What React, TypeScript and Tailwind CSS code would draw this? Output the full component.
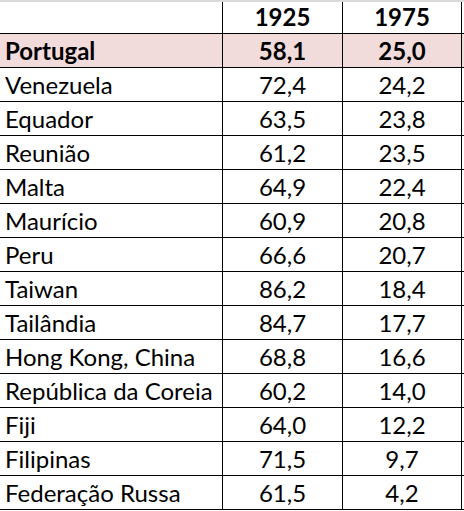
const rows: [string, string, string][] = [
  ['Venezuela', '72,4', '24,2'],
  ['Equador', '63,5', '23,8'],
  ['Reunião', '61,2', '23,5'],
  ['Malta', '64,9', '22,4'],
  ['Maurício', '60,9', '20,8'],
  ['Peru', '66,6', '20,7'],
  ['Taiwan', '86,2', '18,4'],
  ['Tailândia', '84,7', '17,7'],
  ['Hong Kong, China', '68,8', '16,6'],
  ['República da Coreia', '60,2', '14,0'],
  ['Fiji', '64,0', '12,2'],
  ['Filipinas', '71,5', '9,7'],
  ['Federação Russa', '61,5', '4,2'],
]

const Row = ({ cells, bold, pink }: { cells: string[]; bold?: boolean; pink?: boolean }) => (
  <div
    className={`grid grid-cols-[223px_120px_119px] h-[34px] border-b border-black ${pink ? 'bg-[#f2dcdb]' : 'bg-white'} ${bold ? 'font-bold' : ''}`}
  >
    <div className="border-r border-black pl-[5px] flex items-end pb-[1px]">{cells[0]}</div>
    <div className="border-r border-black flex items-end justify-center pb-[1px]">{cells[1]}</div>
    <div className="border-r border-black flex items-end justify-center pb-[1px]">{cells[2]}</div>
  </div>
)

export default function App() {
  return (
    <div className="w-[464px] h-[511px] bg-white text-[24px] leading-[30px] text-black" style={{ fontFamily: 'Lato, sans-serif' }}>
      <div className="border-t-2 border-[#dadada]">
        <div className="grid grid-cols-[223px_120px_119px] h-[32px] border-b border-black font-bold">
          <div className="border-r border-black" />
          <div className="border-r border-black flex items-end justify-center pb-[1px]">1925</div>
          <div className="border-r border-black flex items-end justify-center pb-[1px]">1975</div>
        </div>
        <Row cells={['Portugal', '58,1', '25,0']} bold pink />
        {rows.map((r) => (
          <Row key={r[0]} cells={r} />
        ))}
      </div>
    </div>
  )
}
